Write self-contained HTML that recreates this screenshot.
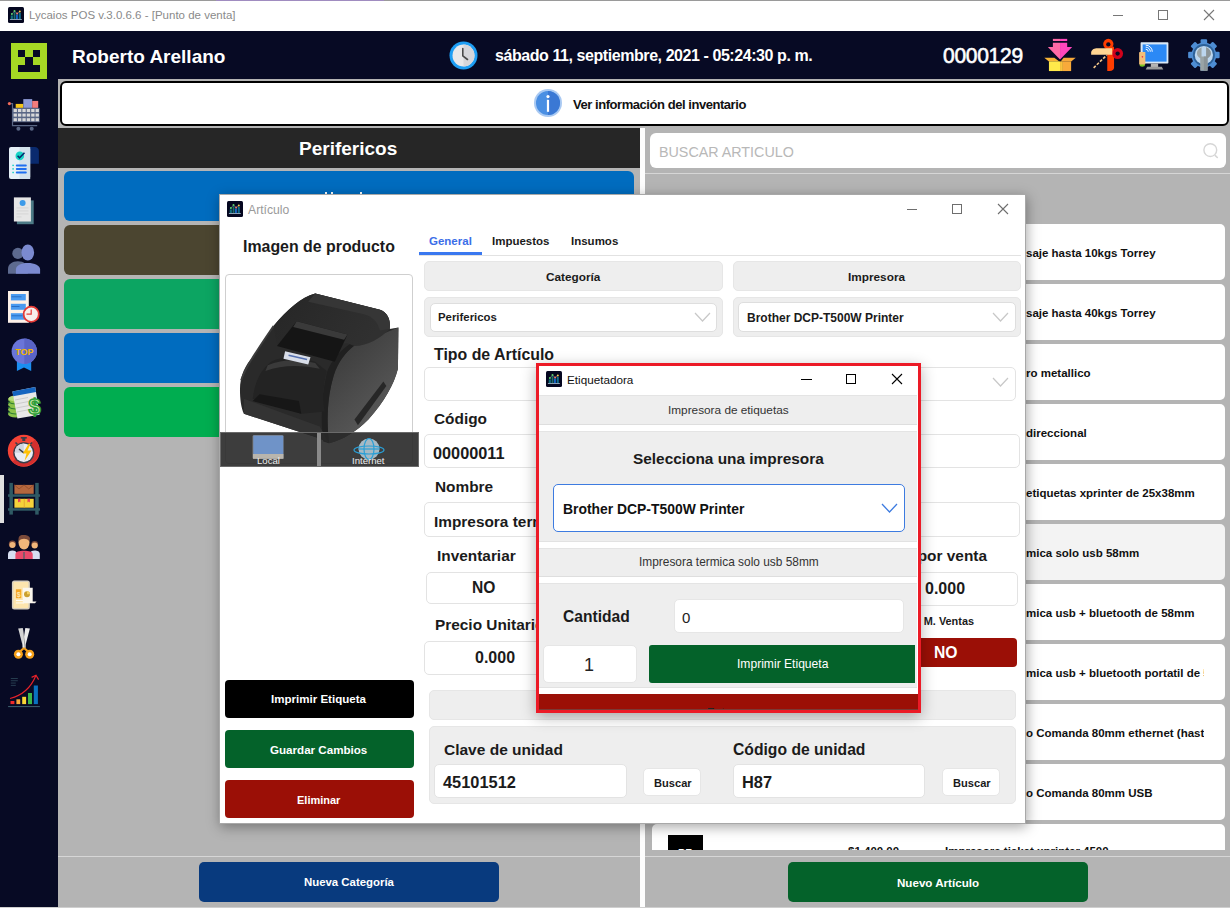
<!DOCTYPE html>
<html><head><meta charset="utf-8">
<style>
*{box-sizing:border-box;margin:0;padding:0}
html,body{width:1230px;height:908px;overflow:hidden;background:#b4b4b4;font-family:"Liberation Sans",sans-serif;position:relative}
.a{position:absolute}
.t{position:absolute;white-space:nowrap;line-height:1}
.b{font-weight:bold}
.li{font-size:11.5px;color:#111;width:178px;overflow:hidden;line-height:13px}
.box{position:absolute;background:#fff;border:1px solid #e3e3e3;border-radius:5px}
.gbox{position:absolute;background:#eee;border:1px solid #e6e6e6;border-radius:5px}
.lbl{position:absolute;white-space:nowrap;line-height:1;font-weight:bold;font-size:15.5px;color:#1b1b1b}
</style></head><body>

<svg width="0" height="0" style="position:absolute"><defs>
<symbol id="app" viewBox="0 0 16 16">
<rect x="0" y="0" width="16" height="16" rx="1.5" fill="#050720"/>
<rect x="2.7" y="8.4" width="2.2" height="3.6" fill="#0f6e7c"/>
<rect x="5.6" y="5.2" width="1.9" height="6.8" fill="#1b6d6d"/>
<rect x="8" y="7.4" width="1.9" height="4.6" fill="#1764c4"/>
<rect x="10.7" y="5.9" width="2.1" height="6.1" fill="#0f6d8c"/>
<rect x="1.9" y="12" width="11.9" height="1" fill="#8aa0b4"/>
<path d="M3.9 7.1L6.5 4L9.1 6.5L11.8 4.5" stroke="#7a8aa0" stroke-width=".6" fill="none"/>
<circle cx="3.9" cy="7.1" r="1" fill="#5ed36a"/><circle cx="6.5" cy="4" r="1" fill="#5ed36a"/>
<circle cx="9.1" cy="6.5" r="1" fill="#f2776a"/><circle cx="11.8" cy="4.5" r="1" fill="#f5cf55"/>
</symbol>
</defs></svg>
<!-- title bar -->
<div class="a" style="left:0;top:0;width:1230px;height:31px;background:#fff;border-top:1px solid #9a9a9a"></div>
<svg class="a" style="left:8px;top:7px" width="16" height="16"><use href="#app"/></svg>
<div class="t" style="left:29px;top:10px;font-size:11.5px;color:#8a8a8a">Lycaios POS v.3.0.6.6 - [Punto de venta]</div>

<div class="a" style="left:1113px;top:15px;width:10px;height:1px;background:#777"></div>
<div class="a" style="left:1158px;top:10px;width:10px;height:10px;border:1px solid #777"></div>
<svg class="a" style="left:1203px;top:9px" width="12" height="12"><path d="M1 1L11 11M11 1L1 11" stroke="#777" stroke-width="1.1"/></svg>
<!-- header -->
<div class="a" style="left:0;top:31px;width:1230px;height:48px;background:#070a24"></div>
<div class="a" style="left:0;top:31px;width:58px;height:877px;background:#070a24"></div>

<!-- logo -->
<div class="a" style="left:11px;top:43px;width:36px;height:36px;background:#a5d824"></div>
<div class="a" style="left:18px;top:50px;width:7px;height:7px;background:#070a24"></div>
<div class="a" style="left:33px;top:50px;width:7px;height:7px;background:#070a24"></div>
<div class="a" style="left:25px;top:57px;width:8px;height:8px;background:#070a24"></div>
<div class="a" style="left:18px;top:65px;width:22px;height:7px;background:#070a24"></div>
<!-- clock -->
<svg class="a" style="left:449px;top:41px" width="29" height="29" viewBox="0 0 29 29">
<circle cx="14.5" cy="14.5" r="14" fill="#1e9ef4"/>
<circle cx="14.5" cy="14.5" r="11" fill="#e8e8ea"/>
<path d="M14.5 3.5A11 11 0 0 1 14.5 25.5Z" fill="#d6d6da"/>
<path d="M13.8 7.5V14.8L18.5 18.5" stroke="#4a4a4a" stroke-width="1.6" fill="none" stroke-linecap="round"/>
</svg>
<!-- header icons -->
<svg class="a" style="left:1040px;top:36px" width="88" height="38" viewBox="0 0 1230 531">
<rect x="180" y="40" width="100" height="30" fill="#ff6aa6"/><rect x="280" y="40" width="100" height="30" fill="#ff46bd"/>
<path d="M180 95H280V330L110 155H180Z" fill="#ff6aa6"/><path d="M280 95H380V155H450L280 330Z" fill="#ff46bd"/>
<path d="M60 305H200L270 355H125Z" fill="#f8b436"/><path d="M330 305H500L435 355H290Z" fill="#f8a93a"/>
<rect x="125" y="355" width="155" height="135" fill="#ffe94a"/><rect x="280" y="355" width="40" height="135" fill="#f9c23c"/><rect x="320" y="355" width="115" height="135" fill="#f8aa3a"/>
<path d="M940 150H1035V440C1035 470 1010 490 975 490H940Z" fill="#ff3d00"/>
<circle cx="955" cy="112" r="72" fill="#ff3d00"/><circle cx="955" cy="118" r="30" fill="#070a24"/>
<circle cx="1085" cy="245" r="76" fill="#d0021b"/><circle cx="1085" cy="245" r="30" fill="#070a24"/>
<path d="M715 262V225C730 180 760 170 800 170H1010V262Z" fill="#ffd593"/>
<path d="M750 445L935 265" stroke="#f5c88a" stroke-width="22" stroke-dasharray="40 22"/>
</svg>
<svg class="a" style="left:1134px;top:36px" width="90" height="38" viewBox="0 0 1230 519">
<rect x="90" y="85" width="380" height="290" rx="10" fill="#d9e8f6"/>
<rect x="118" y="115" width="327" height="235" fill="#2b89f6"/>
<path d="M160 180A35 35 0 0 1 195 215M160 152A63 63 0 0 1 223 215M160 125A90 90 0 0 1 250 215" stroke="#fff" stroke-width="13" fill="none"/>
<rect x="230" y="375" width="100" height="50" fill="#b5b5b5"/>
<path d="M180 420H380L400 458H160Z" fill="#9b9b9b"/>
<ellipse cx="113" cy="395" rx="38" ry="25" fill="#7cc623"/>
<rect x="70" y="220" width="85" height="170" rx="6" fill="#f4bf79"/>
<circle cx="115" cy="285" r="11" fill="#e8334a"/>
<g transform="translate(955,260)">
<g fill="#4e8dd3">
<circle r="170"/>
<rect x="-45" y="-215" width="90" height="80" rx="15"/><rect x="-45" y="135" width="90" height="80" rx="15"/>
<rect x="-215" y="-45" width="80" height="90" rx="15"/><rect x="135" y="-45" width="80" height="90" rx="15"/>
<g transform="rotate(45)"><rect x="-45" y="-215" width="90" height="80" rx="15"/><rect x="-45" y="135" width="90" height="80" rx="15"/>
<rect x="-215" y="-45" width="80" height="90" rx="15"/><rect x="135" y="-45" width="80" height="90" rx="15"/></g>
</g>
<circle r="150" fill="#2d6198"/>
<circle r="125" fill="#bcd6ee"/>
<path d="M-32 -105C-75 -85 -95 -55 -95 -20C-95 15 -65 35 -50 45V215H50V45C65 35 95 15 95 -20C95 -55 75 -85 32 -105V20H-32Z" fill="#9aa4a6"/>
<path d="M0 20H32V-105C75 -85 95 -55 95 -20C95 15 65 35 50 45V215H0Z" fill="#8b9497"/>
</g>
</svg>
<div class="t b" style="left:72px;top:47px;font-size:19px;color:#fff">Roberto Arellano</div>
<div class="t b" style="left:495px;top:48.2px;font-size:16px;letter-spacing:-0.43px;color:#fff">sábado 11, septiembre, 2021 - 05:24:30 p. m.</div>
<div class="t" style="left:942.5px;top:45px;font-size:22px;letter-spacing:-0.3px;-webkit-text-stroke:0.6px #fff;transform:scaleX(0.955);transform-origin:0 0;color:#fff">0000129</div>


<!-- sidebar icons -->
<div class="a" style="left:0;top:475px;width:4px;height:48px;background:#e0e0e0"></div>
<svg class="a" style="left:4px;top:94px" width="40" height="40" viewBox="0 0 40 40">
<rect x="11.7" y="9.9" width="7.6" height="4" fill="#f5c518"/><rect x="19.3" y="5.1" width="8.9" height="8.8" fill="#8d9ad6"/><rect x="28.2" y="6.9" width="6" height="7" fill="#f47c7c"/>
<path d="M5.4 9.6H8.5V31.7H33.2" stroke="#5a6785" stroke-width="1.2" fill="none"/>
<circle cx="5.4" cy="9.6" r="1.6" fill="#f26b5b"/>
<rect x="8.4" y="13.9" width="27.2" height="14.3" fill="#5a6785"/>
<g fill="#d9d9d9">
<rect x="9.6" y="15" width="3.3" height="3"/><rect x="14" y="15" width="3.3" height="3"/><rect x="18.4" y="15" width="3.3" height="3"/><rect x="22.8" y="15" width="3.3" height="3"/><rect x="27.2" y="15" width="3.3" height="3"/><rect x="31.6" y="15" width="3.3" height="3"/>
<rect x="9.6" y="19.6" width="3.3" height="3"/><rect x="14" y="19.6" width="3.3" height="3"/><rect x="18.4" y="19.6" width="3.3" height="3"/><rect x="22.8" y="19.6" width="3.3" height="3"/><rect x="27.2" y="19.6" width="3.3" height="3"/><rect x="31.6" y="19.6" width="3.3" height="3"/>
<rect x="9.6" y="24.2" width="3.3" height="3"/><rect x="14" y="24.2" width="3.3" height="3"/><rect x="18.4" y="24.2" width="3.3" height="3"/><rect x="22.8" y="24.2" width="3.3" height="3"/><rect x="27.2" y="24.2" width="3.3" height="3"/><rect x="31.6" y="24.2" width="3.3" height="3"/>
</g>
<circle cx="14.4" cy="34.7" r="2" fill="#5a6785"/><circle cx="27.7" cy="34.7" r="2" fill="#5a6785"/>
</svg>
<svg class="a" style="left:4px;top:144px" width="40" height="40" viewBox="0 0 40 40">
<path d="M26 3H30.5A4 4 0 0 1 34.9 7V19.8H26Z" fill="#0a2a6e"/>
<rect x="5" y="3" width="21.2" height="32" rx="2" fill="#e6f0f7"/>
<rect x="15.5" y="3" width="10.7" height="32" fill="#d3e2ec"/>
<circle cx="15.8" cy="11.9" r="4.3" fill="#19d3c5"/>
<path d="M13.6 11.8L15.5 13.8L20.5 8.8" stroke="#0a2a6e" stroke-width="1.6" fill="none"/>
<g fill="#19d3c5"><rect x="8.3" y="20.7" width="1.6" height="1.4"/><rect x="8.3" y="24.2" width="1.6" height="1.4"/><rect x="8.3" y="27.8" width="1.6" height="1.4"/></g>
<g fill="#1e6ff0"><rect x="11.8" y="20.4" width="11" height="2" rx="1"/><rect x="11.8" y="23.9" width="11" height="2" rx="1"/><rect x="11.8" y="27.5" width="11" height="2" rx="1"/></g>
</svg>
<svg class="a" style="left:4px;top:192px" width="40" height="40" viewBox="0 0 40 40">
<rect x="12.9" y="8.4" width="16.8" height="23.8" fill="#4c7a86"/>
<rect x="9.9" y="5.4" width="17" height="24.1" fill="#e6e6e6"/>
<circle cx="18.6" cy="10.9" r="3" fill="#3d9be9"/>
<g fill="#d2d2d2"><rect x="12.5" y="15.5" width="12" height=".8"/><rect x="12.5" y="18.5" width="12" height=".8"/><rect x="12.5" y="21.5" width="12" height=".8"/><rect x="12.5" y="24.5" width="5" height=".8"/></g>
</svg>
<svg class="a" style="left:4px;top:240px" width="40" height="40" viewBox="0 0 40 40">
<circle cx="13.9" cy="13.4" r="5.6" fill="#5d6a8f"/>
<path d="M4 33.7V29C4 24.5 8 21.3 13.9 21.3S23.8 24.5 23.8 29V33.7Z" fill="#5d6a8f"/>
<ellipse cx="23.8" cy="12.5" rx="6.3" ry="8" fill="#7b8ad0"/>
<path d="M11.9 33.7V29.5C11.9 25.5 17 23 23.8 23S36.1 25.5 36.1 29.5V33.7Z" fill="#7b8ad0"/>
</svg>
<svg class="a" style="left:4px;top:286px" width="40" height="40" viewBox="0 0 40 40">
<rect x="4" y="5" width="20.8" height="31.8" fill="#fdf1e8"/>
<g fill="#4a9af0"><rect x="6.9" y="8" width="14.9" height="6.4"/><rect x="6.9" y="17.8" width="14.9" height="6"/><rect x="6.9" y="27.2" width="14.9" height="6.5"/></g>
<g fill="#1d5cb0"><rect x="7.5" y="10.5" width="10" height=".7"/><rect x="7.5" y="20" width="8" height=".7"/><rect x="7.5" y="29.5" width="11" height=".7"/></g>
<circle cx="27.2" cy="28.2" r="7.6" fill="#f6efeb" stroke="#e53935" stroke-width="1.8"/>
<path d="M27.2 23.5V28.2H22.5" stroke="#e53935" stroke-width="1.2" fill="none"/>
</svg>
<svg class="a" style="left:4px;top:334px" width="40" height="40" viewBox="0 0 40 40">
<path d="M12.9 27H27.2V37.1L20 33.5L12.9 37.1Z" fill="#1a8ef0"/>
<circle cx="20.3" cy="17.3" r="12.7" fill="#6a75d8"/>
<path d="M20.3 4.6A12.7 12.7 0 0 1 20.3 30Z" fill="#5a64c6"/>
<text x="20.3" y="20.5" text-anchor="middle" font-family="Liberation Sans" font-weight="bold" font-size="9" fill="#f5b800">TOP</text>
</svg>
<svg class="a" style="left:4px;top:382px" width="40" height="40" viewBox="0 0 40 40">
<g fill="#8bc34a"><ellipse cx="11.5" cy="17.5" rx="7.5" ry="3.5"/><ellipse cx="11.5" cy="22.5" rx="7.5" ry="3.5"/><ellipse cx="11.5" cy="27.5" rx="7.5" ry="3.5"/><ellipse cx="11.5" cy="32" rx="7.5" ry="3.5"/></g>
<g stroke="#2e7d32" stroke-width="1.1" fill="none"><path d="M4 20Q11.5 24 19 20"/><path d="M4 25Q11.5 29 19 25"/><path d="M4 30Q11.5 34 19 30"/></g>
<ellipse cx="11.5" cy="16.5" rx="7" ry="3" fill="#b5dc7a"/>
<path d="M8.4 9.4L31.2 5L35.6 32.7L13.4 36.6Z" fill="#e8e8e8"/>
<path d="M8.4 9.4L31.2 5L32 10L9.2 14.2Z" fill="#1565c0"/>
<g stroke="#c8c8c8" stroke-width=".9"><path d="M11 18L24 15.5"/><path d="M11.6 22L24.6 19.5"/><path d="M12.2 26L25.2 23.5"/><path d="M12.8 30L25.8 27.5"/></g>
<text x="30.5" y="32" text-anchor="middle" font-family="Liberation Sans" font-weight="bold" font-size="22" fill="#c5e6a5" stroke="#2e9e3a" stroke-width="1.4">$</text>
</svg>
<svg class="a" style="left:4px;top:430px" width="40" height="40" viewBox="0 0 40 40">
<circle cx="19.8" cy="20.8" r="16" fill="#f44336"/>
<path d="M31.1 9.5A16 16 0 0 1 8.5 32.1L14 26L26 14Z" fill="#d32f2f"/>
<rect x="18.3" y="8" width="3" height="3" fill="#3a3f4a"/><rect x="16.8" y="7" width="6" height="1.6" fill="#3a3f4a"/>
<path d="M11.5 12.5L13.5 14.5M28.1 12.5L26.1 14.5" stroke="#3a3f4a" stroke-width="1.6"/>
<circle cx="19.8" cy="22.8" r="10.6" fill="#3a3f4a"/>
<circle cx="19.8" cy="22.8" r="9.2" fill="#e9edf5"/>
<path d="M19.8 13.6A9.2 9.2 0 0 0 10.6 22.8H19.8Z" fill="#cfd4de"/>
<path d="M15 19L19.8 22.8" stroke="#3a3f4a" stroke-width="1.5"/>
<path d="M24.5 14L18.8 23.5H22.5L20.5 31L27.5 20.5H23.5L26.5 14Z" fill="#ffc107"/>
</svg>
<svg class="a" style="left:0px;top:474px" width="44" height="44" viewBox="0 0 44 44">
<rect x="14.4" y="10.9" width="19.3" height="8.9" fill="#b5673e"/>
<path d="M14.4 10.9L19 15L24 10.9L28.8 15L33.7 10.9" stroke="#8a4a2a" stroke-width=".8" fill="none"/>
<rect x="14.4" y="24.8" width="19.3" height="8.9" fill="#f5d33a"/>
<rect x="23.8" y="24.8" width=".8" height="8.9" fill="#e0a030"/>
<path d="M18 24.8V28.5L19.2 27.6L20.4 28.5V24.8ZM27.5 24.8V28.5L28.7 27.6L29.9 28.5V24.8Z" fill="#e8455a"/>
<rect x="8" y="20.3" width="32" height="2.5" fill="#2f5a64"/><rect x="8" y="34.2" width="32" height="2.5" fill="#2f5a64"/>
<rect x="9.4" y="8.9" width="3.5" height="31.7" fill="#2f5a64"/><rect x="35.2" y="8.9" width="3.5" height="31.7" fill="#2f5a64"/>
</svg>
<svg class="a" style="left:4px;top:530px" width="40" height="32" viewBox="0 0 40 32">
<circle cx="8.4" cy="14" r="3.6" fill="#7a4a3a"/><circle cx="8.4" cy="15" r="3" fill="#f0b67a"/>
<path d="M4 29V24C4 21.5 6 20.5 8.4 20.5S12.8 21.5 12.8 24V29Z" fill="#d6def0"/>
<circle cx="30.7" cy="14.5" r="3.4" fill="#7a4a3a"/><circle cx="30.7" cy="15.5" r="3" fill="#f0b67a"/>
<path d="M26 29V24C26 21.5 28 20.5 30.7 20.5S35.8 21.5 35.8 24V29Z" fill="#d6def0"/>
<ellipse cx="20" cy="12.5" rx="5.5" ry="7" fill="#f0b67a"/>
<path d="M14.5 10C14.5 5 17 5 20 5S26 6 26 9L25 11C23 8 17 8 15 11Z" fill="#7a4a3a"/>
<path d="M11.4 29V24.5C11.4 21.5 15 20.8 20 20.8S28.7 21.5 28.7 24.5V29Z" fill="#e84a6a"/>
<rect x="19.3" y="22" width="1.4" height="7" fill="#5a6068"/>
</svg>
<svg class="a" style="left:4px;top:576px" width="40" height="40" viewBox="0 0 40 40">
<rect x="7.9" y="4.4" width="18" height="29.2" rx="2.5" fill="#d8cfbf"/>
<rect x="9.4" y="6" width="15" height="26" rx="1" fill="#fde5ae"/>
<rect x="11.9" y="13.3" width="5.4" height="8.9" fill="#f5a623"/>
<text x="14.6" y="20.5" text-anchor="middle" font-family="Liberation Sans" font-weight="bold" font-size="7" fill="#fde5ae">$</text>
<g fill="#fff"><rect x="11.9" y="24" width="8" height=".9"/><rect x="11.9" y="26.5" width="8" height=".9"/></g>
<path d="M18.8 11.8H28.7V25.5H32.5L31 27.2H18.8Z" fill="#fbf7ee"/>
<circle cx="23" cy="18.3" r="3" fill="#caa030"/><path d="M23 15.3A3 3 0 0 1 26 18.3H23Z" fill="#f5d060"/>
</svg>
<svg class="a" style="left:4px;top:624px" width="40" height="40" viewBox="0 0 40 40">
<path d="M14.2 4.4L18.8 4L21.8 23.5L19.4 24.6Z" fill="#d4d4d4"/>
<path d="M21.3 4L25.9 4.4L20.6 24.6L18.4 23.5Z" fill="#ececec"/>
<path d="M18.8 4L21.8 23.5L20.6 24Z" fill="#9a9a9a"/>
<circle cx="14.4" cy="30.2" r="4.5" fill="#f5a01a"/><circle cx="25.7" cy="30.2" r="4.5" fill="#f5a01a"/>
<circle cx="14.4" cy="30.2" r="2" fill="#fff"/><circle cx="25.7" cy="30.2" r="2" fill="#fff"/>
<path d="M20 24L16 27.5M20 24L24 27.5" stroke="#f5a01a" stroke-width="2.2"/>
</svg>
<svg class="a" style="left:4px;top:668px" width="40" height="44" viewBox="0 0 40 44">
<g fill="#2a4254"><rect x="6.8" y="10" width="7" height=".9"/><rect x="6.8" y="12.3" width="7" height=".9"/><rect x="6.8" y="14.6" width="5" height=".9"/><rect x="6.8" y="16.9" width="5" height=".9"/></g>
<rect x="4.1" y="38" width="31.8" height="1.1" fill="#3a5a6a"/>
<rect x="6.5" y="33" width="3.9" height="3.1" fill="#f22a2a"/>
<rect x="12.4" y="31.3" width="3.8" height="4.8" fill="#f8a83a"/>
<rect x="18.2" y="28.8" width="3.9" height="7.3" fill="#f9d534"/>
<rect x="24" y="25" width="4" height="11.1" fill="#3db84a"/>
<rect x="29.8" y="17.5" width="4.1" height="18.6" fill="#0a72c0"/>
<path d="M6 30.5C16 28 26 22 31.8 7.8" stroke="#e8222a" stroke-width="1.2" fill="none"/>
<path d="M27.6 9.4L32 7.2L34.6 11.6" stroke="#e8222a" stroke-width="1.2" fill="none"/>
</svg>
<!-- info bar -->
<div class="a" style="left:60px;top:81px;width:1169px;height:45px;background:#fff;border:2px solid #000;border-radius:6px"></div>
<!-- info -->
<svg class="a" style="left:534px;top:89px" width="28" height="28" viewBox="0 0 28 28">
<circle cx="14" cy="14" r="14" fill="#a9c9f2"/>
<circle cx="14" cy="14" r="12" fill="#4a8fe3"/>
<path d="M14 2A12 12 0 0 1 14 26Z" fill="#3a78d4"/>
<circle cx="14" cy="7.6" r="1.6" fill="#fff"/>
<rect x="12.9" y="10.8" width="2.2" height="12" fill="#fff"/>
</svg>
<div class="t b" style="left:573px;top:98.3px;font-size:13px;letter-spacing:-0.45px;color:#111">Ver información del inventario</div>

<!-- left panel -->
<div class="a" style="left:58px;top:128px;width:582px;height:40px;background:#262626"></div>
<div class="t b" style="left:299px;top:139px;font-size:19px;color:#fff">Perifericos</div>
<div class="a" style="left:640px;top:128px;width:5px;height:780px;background:#fdfdfd"></div>
<div class="a" style="left:64px;top:171px;width:570px;height:50px;background:#006cbf;border-radius:6px"></div>
<div class="a" style="left:64px;top:225px;width:570px;height:50px;background:#4b4530;border-radius:6px"></div>
<div class="a" style="left:64px;top:279px;width:570px;height:50px;background:#0ca562;border-radius:6px"></div>
<div class="a" style="left:64px;top:333px;width:570px;height:50px;background:#006cbf;border-radius:6px"></div>
<div class="a" style="left:64px;top:387px;width:570px;height:50px;background:#00ad50;border-radius:6px"></div>
<div class="a" style="left:58px;top:856px;width:582px;height:1px;background:#d6d6d6"></div>
<div class="a" style="left:199px;top:862px;width:300px;height:40px;background:#083a7e;border-radius:5px"></div>
<div class="t b" style="left:304px;top:877px;font-size:11.4px;color:#fff">Nueva Categoría</div>

<!-- right panel -->
<div class="a" style="left:650px;top:133px;width:576px;height:35px;background:#fff;border-radius:6px"></div>
<div class="t" style="left:659px;top:144.5px;font-size:14.3px;color:#b8b8b8">BUSCAR ARTICULO</div>
<svg class="a" style="left:1200px;top:140px" width="22" height="22" viewBox="0 0 22 22">
<circle cx="10.3" cy="10.1" r="6.4" stroke="#d6d6d6" stroke-width="1.4" fill="none"/>
<path d="M15.3 15.6L17.3 17.5" stroke="#d6d6d6" stroke-width="1.6" stroke-linecap="round"/>
</svg>

<div class="a" style="left:645px;top:173px;width:585px;height:1px;background:#d6d6d6"></div>
<div class="a" style="left:645px;top:174px;width:585px;height:676px;overflow:hidden">
<div class="a" style="left:0;top:0;width:585px;height:676px;">
<div class="a" style="left:7px;top:50px;width:573px;height:56px;background:#fff;border-radius:5px"></div>
<div class="t b li" style="left:381px;top:73px">saje hasta 10kgs Torrey</div>
<div class="a" style="left:7px;top:110px;width:573px;height:56px;background:#fff;border-radius:5px"></div>
<div class="t b li" style="left:381px;top:133px">saje hasta 40kgs Torrey</div>
<div class="a" style="left:7px;top:170px;width:573px;height:56px;background:#fff;border-radius:5px"></div>
<div class="t b li" style="left:381px;top:193px">ro metallico</div>
<div class="a" style="left:7px;top:230px;width:573px;height:56px;background:#fff;border-radius:5px"></div>
<div class="t b li" style="left:381px;top:253px">direccional</div>
<div class="a" style="left:7px;top:290px;width:573px;height:56px;background:#fff;border-radius:5px"></div>
<div class="t b li" style="left:381px;top:313px">etiquetas xprinter de 25x38mm</div>
<div class="a" style="left:7px;top:350px;width:573px;height:56px;background:#f3f3f3;border-radius:5px"></div>
<div class="t b li" style="left:381px;top:373px">mica solo usb 58mm</div>
<div class="a" style="left:7px;top:410px;width:573px;height:56px;background:#fff;border-radius:5px"></div>
<div class="t b li" style="left:381px;top:433px">mica usb + bluetooth de 58mm</div>
<div class="a" style="left:7px;top:470px;width:573px;height:56px;background:#fff;border-radius:5px"></div>
<div class="t b li" style="left:381px;top:493px">mica usb + bluetooth portatil de 58mm</div>
<div class="a" style="left:7px;top:530px;width:573px;height:56px;background:#fff;border-radius:5px"></div>
<div class="t b li" style="left:381px;top:553px">o Comanda 80mm ethernet (hasta</div>
<div class="a" style="left:7px;top:590px;width:573px;height:56px;background:#fff;border-radius:5px"></div>
<div class="t b li" style="left:381px;top:613px">o Comanda 80mm USB</div>
<div class="a" style="left:7px;top:650px;width:573px;height:56px;background:#fff;border-radius:5px"></div>
<div class="a" style="left:23px;top:661px;width:35px;height:30px;background:#000"></div>
<div class="t b" style="left:33px;top:673.5px;font-size:11px;color:#fff">PZ</div>
<div class="t b" style="left:203px;top:672px;font-size:11.5px;color:#111">$1,400.00</div>
<div class="t b" style="left:300px;top:672px;font-size:11.5px;color:#111">Impresora ticket xprinter 4500</div>
</div></div>
<div class="a" style="left:645px;top:856px;width:585px;height:1px;background:#d6d6d6"></div>
<div class="a" style="left:788px;top:862px;width:300px;height:40px;background:#04622a;border-radius:5px"></div>
<div class="t b" style="left:897px;top:877px;font-size:11.6px;color:#fff">Nuevo Artículo</div>


<div class="a" style="left:216px;top:0;width:168px;height:1px;background:#a08cc0"></div>
<div class="a" style="left:0;top:907px;width:1230px;height:1px;background:#cfcfcf"></div>
<div class="a" style="left:325px;top:192px;width:2px;height:2px;background:#fff"></div>
<div class="a" style="left:331px;top:192px;width:2px;height:2px;background:#fff"></div>
<div class="a" style="left:360px;top:192px;width:2px;height:2px;background:#fff"></div>
<!-- ARTICULO DIALOG -->
<div class="a" style="left:219px;top:194px;width:807px;height:630px;background:#fff;border:1px solid #a8a8a8;box-shadow:1px 3px 12px rgba(0,0,0,.35)"></div>
<svg class="a" style="left:227px;top:201px" width="16" height="16"><use href="#app"/></svg>
<div class="t" style="left:248px;top:203.5px;font-size:12.2px;color:#9a9a9a">Artículo</div>
<div class="a" style="left:907px;top:209px;width:10px;height:1px;background:#6e6e6e"></div>
<div class="a" style="left:952px;top:204px;width:10px;height:10px;border:1px solid #6e6e6e"></div>
<svg class="a" style="left:997px;top:203px" width="12" height="12"><path d="M1 1L11 11M11 1L1 11" stroke="#6e6e6e" stroke-width="1.1"/></svg>

<div class="t b" style="left:243px;top:239px;font-size:15.9px;color:#1b1b1b">Imagen de producto</div>
<div class="a" style="left:225px;top:274px;width:188px;height:190px;border:1px solid #cfcfcf;border-radius:4px;background:#fff"></div>
<svg class="a" style="left:218px;top:260px" width="210" height="210" viewBox="0 0 908 908">
<defs>
<linearGradient id="gside" x1="0" y1="0" x2="0.6" y2="1"><stop offset="0" stop-color="#353535"/><stop offset="1" stop-color="#5c5c5c"/></linearGradient>
<linearGradient id="glid" x1="0" y1="0" x2="1" y2="0.3"><stop offset="0" stop-color="#262626"/><stop offset="1" stop-color="#303030"/></linearGradient>
</defs>
<path d="M95 560C95 500 120 450 150 420L240 285C300 215 360 160 420 145L700 215C730 225 748 255 742 298L780 292L778 470C760 540 720 610 650 690C600 740 540 780 480 792L440 772L112 665C100 640 95 600 95 560Z" fill="#2a2a2a"/>
<path d="M590 370L780 292L778 470C760 540 720 610 650 690C600 740 540 780 480 792C470 700 470 600 500 500C520 440 550 400 590 370Z" fill="url(#gside)"/>
<path d="M590 370C550 400 520 440 500 500C470 600 470 700 480 792L455 785C445 700 445 600 470 490C490 430 530 390 575 360Z" fill="#202020"/>
<path d="M240 285C300 215 360 160 420 145L700 215C730 225 748 255 742 298C700 340 650 370 590 372L560 360L255 372Z" fill="url(#glid)"/>
<path d="M420 145L700 215C730 225 748 255 742 298L700 305C690 270 670 245 630 235L390 180Z" fill="#363636"/>
<path d="M255 372L340 265L560 322L505 440Z" fill="#151515"/>
<path d="M340 265L560 322L545 345L325 290Z" fill="#3a3a3a"/>
<path d="M150 600C160 520 190 470 230 440C280 410 360 420 420 440L470 480C455 540 450 600 462 655L360 665Z" fill="#232323"/>
<path d="M215 455C280 425 360 430 420 445L440 470C370 455 280 450 205 480Z" fill="#3a3a3a"/>
<path d="M180 580L350 610L360 665L150 610Z" fill="#171717"/>
<path d="M112 600L440 720L480 792L440 772L112 665Z" fill="#333"/>
<path d="M290 395L400 420L390 452L283 427Z" fill="#d8dde8"/>
<path d="M305 412L385 430" stroke="#5570b0" stroke-width="7"/>
<path d="M100 520C120 460 170 390 240 285" stroke="#3c3c3c" stroke-width="8" fill="none"/>
<path d="M590 690L715 525L728 545L605 715Z" fill="#272727"/>
</svg>
<div class="a" style="left:220px;top:432px;width:199px;height:35px;background:rgba(40,40,40,.9);border:1px solid #6a6a6a"></div>
<div class="a" style="left:317px;top:433px;width:4px;height:33px;background:#8a8a8a"></div>
<svg class="a" style="left:250px;top:434px" width="36" height="26" viewBox="0 0 36 26">
<rect x="2.5" y="1" width="31" height="24" rx="1.5" fill="#7a7a7a"/>
<rect x="3.3" y="1.6" width="30" height="18.5" fill="#6f93c8"/>
<rect x="3" y="20" width="30.5" height="4.8" fill="#b9b5ad"/>
</svg>
<svg class="a" style="left:353px;top:437px" width="32" height="24" viewBox="0 0 32 24">
<circle cx="16" cy="12" r="10.5" fill="#a6b9c4"/>
<ellipse cx="16" cy="12" rx="5" ry="10.5" stroke="#2a9fd6" stroke-width="1.2" fill="none"/>
<ellipse cx="16" cy="13" rx="15" ry="4" stroke="#2a9fd6" stroke-width="1.2" fill="none"/>
<path d="M5.5 12H26.5" stroke="#2a9fd6" stroke-width="1.2"/>
</svg>
<div class="t" style="left:257px;top:456px;font-size:9.6px;color:#eee">Local</div>
<div class="t" style="left:352px;top:456px;font-size:9.6px;color:#eee">Internet</div>


<div class="t b" style="left:429px;top:235.5px;font-size:11.5px;color:#3b6ee8">General</div>
<div class="t b" style="left:492px;top:235.5px;font-size:11.5px;color:#1b1b1b">Impuestos</div>
<div class="t b" style="left:571px;top:235.5px;font-size:11.5px;color:#1b1b1b">Insumos</div>
<div class="a" style="left:419px;top:255px;width:602px;height:1px;background:#e2e2e2"></div>
<div class="a" style="left:419px;top:252px;width:63px;height:3px;background:#3a78f0"></div>

<div class="gbox" style="left:424px;top:261px;width:299px;height:30px"></div>
<div class="t b" style="left:546px;top:272px;font-size:11.8px;color:#1b1b1b">Categoría</div>
<div class="gbox" style="left:424px;top:297px;width:299px;height:40px"></div>
<div class="box" style="left:430px;top:303px;width:287px;height:29px;border-color:#dedede"></div>
<div class="t b" style="left:438px;top:312.3px;font-size:11.4px;color:#1b1b1b">Perifericos</div>
<svg class="a" style="left:694px;top:312px" width="17" height="11"><path d="M1 1L8.5 9L16 1" fill="none" stroke="#c8c8c8" stroke-width="1.2"/></svg>

<div class="gbox" style="left:733px;top:261px;width:288px;height:30px"></div>
<div class="t b" style="left:848px;top:272px;font-size:11.8px;color:#1b1b1b">Impresora</div>
<div class="gbox" style="left:733px;top:297px;width:288px;height:40px"></div>
<div class="box" style="left:738px;top:302px;width:278px;height:30px;border-color:#dedede"></div>
<div class="t b" style="left:747px;top:312px;font-size:12px;color:#1b1b1b">Brother DCP-T500W Printer</div>
<svg class="a" style="left:992px;top:312px" width="17" height="11"><path d="M1 1L8.5 9L16 1" fill="none" stroke="#c8c8c8" stroke-width="1.2"/></svg>

<div class="lbl" style="left:434px;top:346.5px;font-size:15.9px">Tipo de Artículo</div>
<div class="box" style="left:424px;top:367px;width:592px;height:34px"></div>
<svg class="a" style="left:992px;top:377px" width="17" height="11"><path d="M1 1L8.5 9L16 1" fill="none" stroke="#c8c8c8" stroke-width="1.2"/></svg>

<div class="lbl" style="left:434px;top:411px;font-size:15.4px">Código</div>
<div class="box" style="left:424px;top:434px;width:596px;height:34px"></div>
<div class="t b" style="left:433px;top:445px;font-size:16.3px;color:#1b1b1b">00000011</div>

<div class="lbl" style="left:435px;top:479px;font-size:15.4px">Nombre</div>
<div class="box" style="left:424px;top:502px;width:596px;height:35px"></div>
<div class="t b" style="left:434px;top:514px;font-size:15.4px;color:#1b1b1b">Impresora termica solo usb 58mm</div>

<div class="lbl" style="left:437px;top:548px;font-size:15.4px">Inventariar</div>
<div class="box" style="left:426px;top:572px;width:190px;height:32px"></div>
<div class="t b" style="left:472px;top:580px;font-size:15.6px;color:#1b1b1b">NO</div>
<div class="lbl" style="right:243px;top:548px;font-size:15.4px">Precio por venta</div>
<div class="box" style="left:828px;top:572px;width:190px;height:34px"></div>
<div class="t b" style="left:925px;top:581px;font-size:16px;color:#1b1b1b">0.000</div>

<div class="lbl" style="left:435px;top:617px;font-size:15.4px">Precio Unitario</div>
<div class="box" style="left:424px;top:641px;width:190px;height:34px"></div>
<div class="t b" style="left:475px;top:650px;font-size:16px;color:#1b1b1b">0.000</div>
<div class="t b" style="right:256px;top:616px;font-size:10.9px;color:#1b1b1b">Permitir M. Ventas</div>
<div class="a" style="left:828px;top:638px;width:189px;height:29px;background:#9b0f06;border-radius:4px"></div>
<div class="t b" style="left:934px;top:645px;font-size:15.7px;color:#fff">NO</div>

<div class="gbox" style="left:429px;top:690px;width:587px;height:30px"></div>
<div class="gbox" style="left:429px;top:726px;width:587px;height:78px"></div>
<div class="lbl" style="left:444px;top:741.5px;font-size:15.5px">Clave de unidad</div>
<div class="lbl" style="left:733px;top:741.5px;font-size:15.7px">Código de unidad</div>
<div class="box" style="left:434px;top:764px;width:193px;height:34px"></div>
<div class="t b" style="left:443px;top:774px;font-size:16.4px;color:#1b1b1b">45101512</div>
<div class="box" style="left:643px;top:768px;width:58px;height:28px;border-color:#e6e6e6"></div>
<div class="t b" style="left:654px;top:778px;font-size:11.1px;color:#1b1b1b">Buscar</div>
<div class="box" style="left:733px;top:764px;width:192px;height:34px"></div>
<div class="t b" style="left:742px;top:774px;font-size:16.4px;color:#1b1b1b">H87</div>
<div class="box" style="left:942px;top:768px;width:58px;height:28px;border-color:#e6e6e6"></div>
<div class="t b" style="left:953px;top:778px;font-size:11.1px;color:#1b1b1b">Buscar</div>

<div class="a" style="left:225px;top:680px;width:189px;height:38px;background:#000;border-radius:4px"></div>
<div class="t b" style="left:271px;top:694.2px;font-size:11.55px;color:#fff">Imprimir Etiqueta</div>
<div class="a" style="left:225px;top:730px;width:189px;height:38px;background:#04622a;border-radius:4px"></div>
<div class="t b" style="left:270px;top:744px;font-size:11.6px;color:#fff">Guardar Cambios</div>
<div class="a" style="left:225px;top:780px;width:189px;height:38px;background:#9b0f06;border-radius:4px"></div>
<div class="t b" style="left:297px;top:794.6px;font-size:11px;color:#fff">Eliminar</div>

<!-- ETIQUETADORA -->
<div class="a" style="left:536px;top:363px;width:385px;height:350px;background:#fff;border:3px solid #ec1a26;box-shadow:0 4px 14px rgba(0,0,0,.3)"></div>
<svg class="a" style="left:546px;top:371px" width="16" height="16"><use href="#app"/></svg>
<div class="t" style="left:567px;top:374px;font-size:11.7px;color:#111">Etiquetadora</div>
<div class="a" style="left:801px;top:379px;width:11px;height:1px;background:#000"></div>
<div class="a" style="left:846px;top:374px;width:10px;height:10px;border:1px solid #000"></div>
<svg class="a" style="left:891px;top:373px" width="12" height="12"><path d="M1 1L11 11M11 1L1 11" stroke="#000" stroke-width="1.1"/></svg>

<div class="a" style="left:539px;top:395px;width:378px;height:30px;background:#eee;border-top:1px solid #e4e4e4;border-bottom:1px solid #dedede"></div>
<div class="t" style="left:668px;top:405px;font-size:11.8px;color:#333">Impresora de etiquetas</div>
<div class="a" style="left:539px;top:431px;width:378px;height:111px;background:#eee;border-top:1px solid #e4e4e4;border-bottom:1px solid #e2e2e2"></div>
<div class="t b" style="left:633px;top:451px;font-size:15.4px;color:#1b1b1b">Selecciona una impresora</div>
<div class="a" style="left:553px;top:484px;width:352px;height:48px;background:#fff;border:1px solid #3d7be0;border-radius:5px"></div>
<div class="t b" style="left:563px;top:503px;font-size:13.9px;color:#111">Brother DCP-T500W Printer</div>
<svg class="a" style="left:881px;top:503px" width="17" height="11"><path d="M1 1L8.5 9L16 1" fill="none" stroke="#3d7be0" stroke-width="1.3"/></svg>
<div class="a" style="left:539px;top:548px;width:378px;height:29px;background:#eee;border-top:1px solid #e4e4e4;border-bottom:1px solid #dedede"></div>
<div class="t" style="left:639px;top:557px;font-size:11.9px;color:#333">Impresora termica solo usb 58mm</div>
<div class="a" style="left:539px;top:583px;width:378px;height:105px;background:#eee;border-top:1px solid #e4e4e4;border-bottom:1px solid #e2e2e2"></div>
<div class="t b" style="left:563px;top:609.3px;font-size:15.6px;color:#1b1b1b">Cantidad</div>
<div class="box" style="left:674px;top:599px;width:230px;height:34px;border-color:#e6e6e6"></div>
<div class="t" style="left:682px;top:609.8px;font-size:15px;color:#222">0</div>
<div class="box" style="left:543px;top:645px;width:94px;height:38px;border-color:#e6e6e6"></div>
<div class="t" style="left:584px;top:656px;font-size:18px;color:#222">1</div>
<div class="a" style="left:649px;top:645px;width:266px;height:38px;background:#04622a;border-radius:3px 0 0 3px"></div>
<div class="t" style="left:737px;top:658px;font-size:12.1px;color:#fff">Imprimir Etiqueta</div>
<div class="a" style="left:539px;top:694px;width:379px;height:16px;background:#9b0f06;border-bottom:1px solid #7a3a35;overflow:hidden"><div class="t b" style="left:168px;top:13px;font-size:11px;color:#222">Entrar</div></div>
</body></html>
